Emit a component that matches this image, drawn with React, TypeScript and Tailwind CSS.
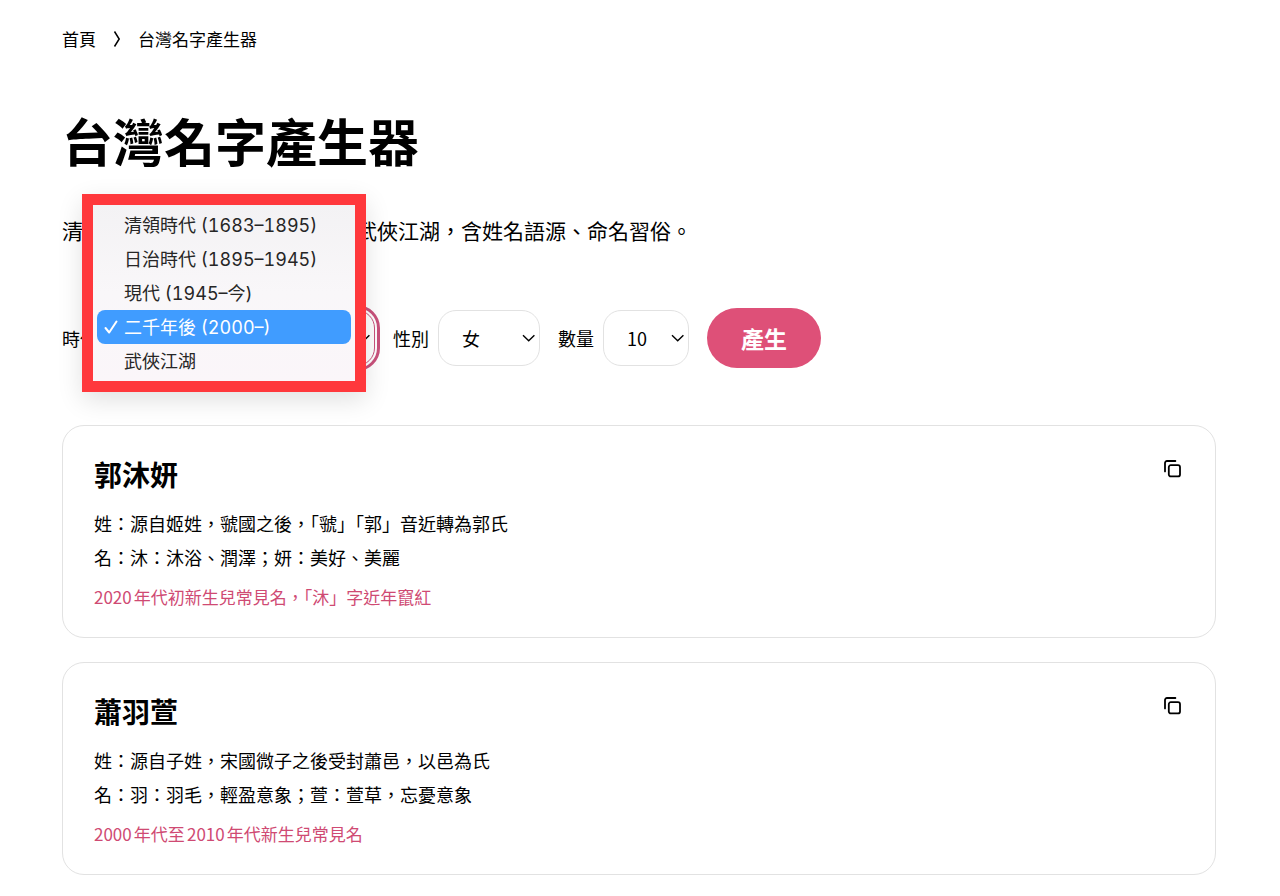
import { useState } from 'react';

const ERAS = [
  '清領時代 (1683–1895)',
  '日治時代 (1895–1945)',
  '現代 (1945–今)',
  '二千年後 (2000–)',
  '武俠江湖',
];

interface GeneratedName {
  name: string;
  surname: string;
  given: string;
  note: string;
}

const NAMES: GeneratedName[] = [
  {
    name: '郭沐妍',
    surname: '源自姬姓，虢國之後，「虢」「郭」音近轉為郭氏',
    given: '沐：沐浴、潤澤；妍：美好、美麗',
    note: '2020年代初新生兒常見名，「沐」字近年竄紅',
  },
  {
    name: '蕭羽萱',
    surname: '源自子姓，宋國微子之後受封蕭邑，以邑為氏',
    given: '羽：羽毛，輕盈意象；萱：萱草，忘憂意象',
    note: '2000年代至2010年代新生兒常見名',
  },
];

export default function App() {
  const [era, setEra] = useState(ERAS[3]);
  const [gender, setGender] = useState('女');
  const [count, setCount] = useState('10');

  return (
    <div
      lang="zh-Hant-TW"
      className="min-h-screen bg-white pt-6 pr-16 pb-5 pl-[62px] font-['Noto_Sans_CJK_TC',sans-serif] text-black [text-autospace:normal]"
    >
      <nav aria-label="breadcrumb" className="flex items-center gap-4 text-[17px] leading-[30px]">
        <a href="#">首頁</a>
        <svg aria-hidden="true" viewBox="0 0 10 18" className="h-[18px] w-2.5" fill="none" stroke="currentColor" strokeWidth="1.5">
          <path d="M2.5 1.5 7.2 9l-4.7 7.5" />
        </svg>
        <a href="#">台灣名字產生器</a>
      </nav>

      <main>
        <h1 className="mt-[54px] text-[51px] leading-16 font-bold">台灣名字產生器</h1>
        <p className="mt-[42px] text-[21px] leading-8">
          清領、日治、現代、二千年後、武俠江湖，含姓名語源、命名習俗。
        </p>

        <form
          className="mt-[62px] flex items-center gap-[18px] text-[18px]"
          onSubmit={(e) => e.preventDefault()}
        >
          <div className="flex items-center gap-[9px]">
            <label htmlFor="era">時代</label>
            <div className="relative">
              <Select id="era" value={era} options={ERAS} onChange={setEra} active />
              <EraMenu value={era} onSelect={setEra} />
            </div>
          </div>
          <div className="flex items-center gap-[9px]">
            <label htmlFor="gender">性別</label>
            <Select id="gender" value={gender} options={['女', '男', '不限']} onChange={setGender} />
          </div>
          <div className="flex items-center gap-[9px]">
            <label htmlFor="count">數量</label>
            <Select id="count" value={count} options={['10', '20', '50']} onChange={setCount} />
          </div>
          <button type="submit" className="h-[60px] rounded-full bg-[#de5078] px-[34px] text-[23px] font-bold text-white">
            產生
          </button>
        </form>

        <div className="mt-[57px] flex flex-col gap-6">
          {NAMES.map((item) => (
            <NameCard key={item.name} item={item} />
          ))}
        </div>
      </main>
    </div>
  );
}

interface SelectProps {
  id: string;
  value: string;
  options: string[];
  onChange: (value: string) => void;
  active?: boolean;
}

function Select({ id, value, options, onChange, active }: SelectProps) {
  const width = { era: 'w-[268px]', gender: 'w-[102px]', count: 'w-[86px]' }[id];
  const state = active
    ? 'border-[#c9527c] outline-3 outline-offset-2 outline-[#c9527c]'
    : 'border-[#e2e2e2]';

  return (
    <div className="relative">
      <select
        id={id}
        value={value}
        onChange={(e) => onChange(e.target.value)}
        className={`h-14 appearance-none rounded-[18px] border bg-white pl-[23px] ${width} ${state}`}
      >
        {options.map((option) => (
          <option key={option}>{option}</option>
        ))}
      </select>
      <svg
        aria-hidden="true"
        viewBox="0 0 14 8"
        className="pointer-events-none absolute top-6 right-1 h-2 w-3.5"
        fill="none"
        stroke="currentColor"
        strokeWidth="1.4"
      >
        <path d="m1 1.2 5.7 5.6 5.7-5.6" />
      </svg>
    </div>
  );
}

function EraMenu({ value, onSelect }: { value: string; onSelect: (era: string) => void }) {
  return (
    <div
      role="listbox"
      aria-label="時代"
      className="absolute -top-[116px] -left-[25px] z-10 flex w-[284px] flex-col border-11 border-[#ff383c] bg-linear-to-b from-[#f3f2f4] via-[#f9f7f9] to-[#fbf6f9] px-1 py-[3px] font-['Inter','Noto_Sans_CJK_TC',sans-serif] text-[#262626] tabular-nums shadow-[0_8px_24px_rgba(0,0,0,0.12)] [text-autospace:no-autospace]"
    >
      {ERAS.map((era) => {
        const selected = era === value;
        return (
          <button
            key={era}
            type="button"
            role="option"
            aria-selected={selected}
            onClick={() => onSelect(era)}
            className={`flex h-[34px] items-center rounded-lg pl-[7px] text-left whitespace-nowrap ${selected ? 'bg-[#409cff] text-white' : ''}`}
          >
            <span className="w-5">
              {selected && (
                <svg aria-hidden="true" viewBox="0 0 14 14" className="size-3.5" fill="none" stroke="currentColor" strokeWidth="2" strokeLinecap="round" strokeLinejoin="round">
                  <path d="m1.5 8 3.7 4.5L12.5 1.5" />
                </svg>
              )}
            </span>
            {era}
          </button>
        );
      })}
    </div>
  );
}

function NameCard({ item }: { item: GeneratedName }) {
  return (
    <article className="flex items-start justify-between rounded-[22px] border border-[#e2e2e2] pt-7 pr-[33px] pb-[25px] pl-[31px]">
      <div>
        <h2 className="text-[28px] leading-10 font-bold">{item.name}</h2>
        <div className="mt-3 text-[18px] leading-[34px]">
          <p>姓：{item.surname}</p>
          <p>名：{item.given}</p>
        </div>
        <p className="mt-2 text-[17px] leading-[30px] text-[#cf4a73]">{item.note}</p>
      </div>
      <button type="button" aria-label="複製" className="mt-1.5">
        <svg viewBox="0 0 18 18" className="size-[18px]" fill="none" stroke="currentColor" strokeWidth="1.8" strokeLinecap="round">
          <path d="M1 11.4V3a2 2 0 0 1 2-2h8.4" />
          <rect x="4.8" y="5.2" width="11.2" height="11.2" rx="2" />
        </svg>
      </button>
    </article>
  );
}
